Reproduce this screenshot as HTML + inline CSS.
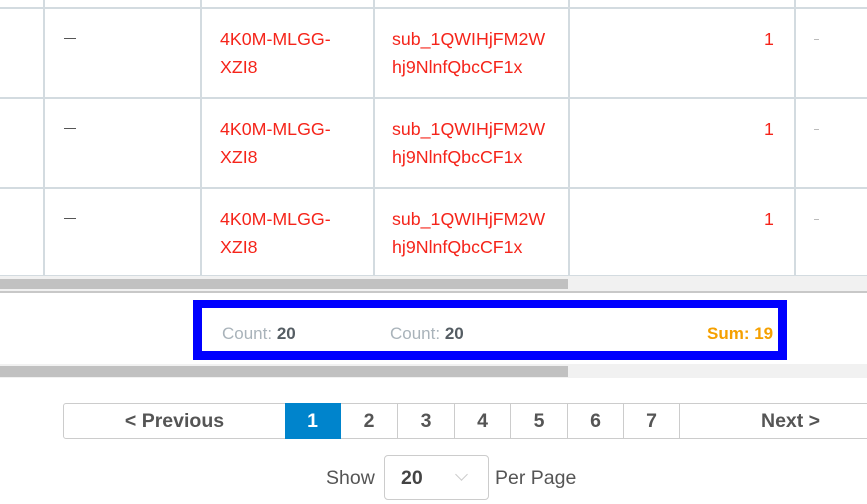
<!DOCTYPE html>
<html><head><style>
*{margin:0;padding:0;box-sizing:border-box}
body{width:867px;height:504px;overflow:hidden;background:#fff;font-family:"Liberation Sans",sans-serif;position:relative}
.a{position:absolute}
.vl{position:absolute;top:0;height:276px;width:2px;background:#d3dbe0}
.hl{position:absolute;left:0;width:867px;height:2px;background:#d3dbe0}
.r{color:#f5241a;font-size:17.8px;line-height:28px}
.pg{position:absolute;top:403px;height:36px;border:1px solid #ccc;border-left:none;text-align:center;line-height:35px;font-size:19.5px;color:#555;font-weight:bold}
</style></head><body>
<div class="vl" style="left:43px"></div>
<div class="vl" style="left:200px"></div>
<div class="vl" style="left:373px"></div>
<div class="vl" style="left:568px"></div>
<div class="vl" style="left:794px"></div>
<div class="hl" style="top:7px"></div>
<div class="hl" style="top:97px"></div>
<div class="hl" style="top:187px"></div>
<div class="hl" style="top:275px;height:1px"></div>

<div class="a" style="left:0;top:25px;width:867px">
<div class="a" style="left:64px;top:13px;width:12px;height:1px;background:#555"></div>
<div class="a r" style="left:220px;top:0">4K0M-MLGG-<br>XZI8</div>
<div class="a r" style="left:392px;top:0">sub_1QWIHjFM2W<br>hj9NlnfQbcCF1x</div>
<div class="a r" style="left:764px;top:0">1</div>
<div class="a" style="left:814px;top:14px;width:5px;height:1px;background:#bbb"></div>
</div>
<div class="a" style="left:0;top:115px;width:867px">
<div class="a" style="left:64px;top:13px;width:12px;height:1px;background:#555"></div>
<div class="a r" style="left:220px;top:0">4K0M-MLGG-<br>XZI8</div>
<div class="a r" style="left:392px;top:0">sub_1QWIHjFM2W<br>hj9NlnfQbcCF1x</div>
<div class="a r" style="left:764px;top:0">1</div>
<div class="a" style="left:814px;top:14px;width:5px;height:1px;background:#bbb"></div>
</div>
<div class="a" style="left:0;top:205px;width:867px">
<div class="a" style="left:64px;top:13px;width:12px;height:1px;background:#555"></div>
<div class="a r" style="left:220px;top:0">4K0M-MLGG-<br>XZI8</div>
<div class="a r" style="left:392px;top:0">sub_1QWIHjFM2W<br>hj9NlnfQbcCF1x</div>
<div class="a r" style="left:764px;top:0">1</div>
<div class="a" style="left:814px;top:14px;width:5px;height:1px;background:#bbb"></div>
</div>

<div class="a" style="left:0;top:276px;width:867px;height:15px;background:#f1f1f1"></div>
<div class="a" style="left:0;top:279px;width:568px;height:10px;background:#c1c1c1"></div>
<div class="a" style="left:0;top:291px;width:867px;height:2px;background:#c8c8c8"></div>

<div class="a" style="left:193px;top:300px;width:594px;height:60px;border:9px solid #0000ff;border-top-width:8px;border-bottom-width:9px"></div>
<div class="a" style="left:222px;top:324px;font-size:17px;color:#a9b3ba">Count: <b style="color:#555d63">20</b></div>
<div class="a" style="left:390px;top:324px;font-size:17px;color:#a9b3ba">Count: <b style="color:#555d63">20</b></div>
<div class="a" style="left:707px;top:324px;font-size:17px;color:#f5a000;font-weight:bold">Sum: 19</div>

<div class="a" style="left:0;top:364px;width:867px;height:14px;background:#f1f1f1"></div>
<div class="a" style="left:0;top:366px;width:568px;height:11px;background:#c1c1c1"></div>

<div class="pg" style="left:63px;width:223px;border-left:1px solid #ccc;border-radius:3px 0 0 3px">&lt; Previous</div>
<div class="pg" style="left:285px;width:56px;background:#0084cc;color:#fff;border-color:#0084cc">1</div>
<div class="pg" style="left:341px;width:57px">2</div>
<div class="pg" style="left:398px;width:57px">3</div>
<div class="pg" style="left:455px;width:56px">4</div>
<div class="pg" style="left:511px;width:57px">5</div>
<div class="pg" style="left:568px;width:56px">6</div>
<div class="pg" style="left:624px;width:56px">7</div>
<div class="pg" style="left:680px;width:200px;text-align:left;padding-left:81px">Next &gt;</div>

<div class="a" style="left:326px;top:467px;font-size:19.5px;color:#555">Show</div>
<div class="a" style="left:384px;top:455px;width:105px;height:45px;border:1px solid #ccc;border-radius:4px"></div>
<div class="a" style="left:401px;top:467px;font-size:19.5px;color:#444;font-weight:bold">20</div>
<div class="a" style="left:457px;top:470px;width:9px;height:9px;border-right:1.5px solid #ccc;border-bottom:1.5px solid #ccc;transform:rotate(45deg)"></div>
<div class="a" style="left:495px;top:467px;font-size:19.5px;color:#555">Per Page</div>
</body></html>
